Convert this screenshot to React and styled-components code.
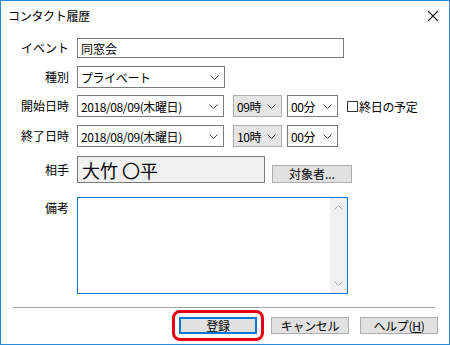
import React from "react";
import styled, { createGlobalStyle } from "styled-components";

const GlobalStyle = createGlobalStyle`
  body {
    margin: 0;
    background: #ffffff;
    font-family: "Noto Sans CJK JP", "Liberation Sans", sans-serif;
  }
`;

const Chevron = ({ up, color = "#444" }) => (
  <svg width="9" height="5" viewBox="0 0 9 5">
    <path
      d={up ? "M0.5 4.5 L4.5 0.5 L8.5 4.5" : "M0.5 0.5 L4.5 4.5 L8.5 0.5"}
      fill="none"
      stroke={color}
      strokeWidth="1"
    />
  </svg>
);

const App = () => {
  return (
    <Window>
      <GlobalStyle />
      <TitleBar>
        <Title>コンタクト履歴</Title>
        <CloseIcon viewBox="0 0 12 12">
          <path d="M1 1 L11 11 M11 1 L1 11" stroke="#222" strokeWidth="1.1" />
        </CloseIcon>
      </TitleBar>

      <Form>
        <Row $mt={8}>
          <Label>イベント</Label>
          <TextBox>同窓会</TextBox>
        </Row>
        <Row $mt={8}>
          <Label>種別</Label>
          <Select $w={148}>
            プライベート
            <Chevron />
          </Select>
        </Row>
        <Row $mt={7}>
          <Label>開始日時</Label>
          <Fields>
            <Select $w={147}>
              2018/08/09(木曜日)
              <Chevron />
            </Select>
            <Select $w={49} $gray $ml={9}>
              09時
              <Chevron />
            </Select>
            <Select $w={51} $ml={5}>
              00分
              <Chevron />
            </Select>
            <Check>
              <Box />
              終日の予定
            </Check>
          </Fields>
        </Row>
        <Row $mt={8}>
          <Label>終了日時</Label>
          <Fields>
            <Select $w={147}>
              2018/08/09(木曜日)
              <Chevron />
            </Select>
            <Select $w={49} $gray $ml={9}>
              10時
              <Chevron />
            </Select>
            <Select $w={51} $ml={5}>
              00分
              <Chevron />
            </Select>
          </Fields>
        </Row>
        <Row $mt={9}>
          <Label>相手</Label>
          <Fields>
            <PartnerBox>大竹 〇平</PartnerBox>
            <SmallButton>対象者...</SmallButton>
          </Fields>
        </Row>
        <Row $mt={14} $top>
          <Label $pt={4}>備考</Label>
          <Memo>
            <MemoText />
            <ScrollBar>
              <Chevron up color="#a6a6a6" />
              <Chevron color="#a6a6a6" />
            </ScrollBar>
          </Memo>
        </Row>
      </Form>

      <Separator />

      <ButtonBar>
        <Highlight>
          <Button $default>登録</Button>
        </Highlight>
        <Button>キャンセル</Button>
        <Button>ヘルプ(<u>H</u>)</Button>
      </ButtonBar>
    </Window>
  );
};

export default App;

const Window = styled.div`
  width: 450px;
  height: 345px;
  box-sizing: border-box;
  border: 1px solid #2b88d8;
  background: #ffffff;
  display: flex;
  flex-direction: column;
  font-size: 12px;
  color: #000;
`;

const TitleBar = styled.div`
  height: 29px;
  display: flex;
  align-items: center;
  justify-content: space-between;
  padding: 0 10px 0 7px;
`;

const Title = styled.div`
  font-size: 12px;
  letter-spacing: -0.3px;
`;

const CloseIcon = styled.svg`
  width: 12px;
  height: 12px;
`;

const Form = styled.div`
  display: flex;
  flex-direction: column;
`;

const Row = styled.div`
  display: grid;
  grid-template-columns: 68px auto;
  column-gap: 8px;
  align-items: ${(p) => (p.$top ? "start" : "center")};
  margin-top: ${(p) => p.$mt}px;
`;

const Label = styled.div`
  text-align: right;
  font-size: 12px;
  line-height: 14px;
  padding-top: ${(p) => p.$pt || 0}px;
`;

const TextBox = styled.div`
  width: 267px;
  height: 20px;
  box-sizing: border-box;
  border: 1px solid #7a7a7a;
  padding: 0 3px;
  display: flex;
  align-items: center;
  font-size: 12px;
`;

const Fields = styled.div`
  display: flex;
  align-items: center;
`;

const Select = styled.div`
  width: ${(p) => p.$w}px;
  height: 22px;
  box-sizing: border-box;
  margin-left: ${(p) => p.$ml || 0}px;
  border: 1px solid ${(p) => (p.$gray ? "#adadad" : "#7a7a7a")};
  background: ${(p) => (p.$gray ? "#e5e5e5" : "#ffffff")};
  display: flex;
  align-items: center;
  justify-content: space-between;
  padding: 0 5px 0 3px;
  font-size: 12px;
  letter-spacing: -0.4px;
  white-space: nowrap;
`;

const Check = styled.label`
  display: flex;
  align-items: center;
  margin-left: 9px;
  font-size: 12px;
  letter-spacing: -0.3px;
`;

const Box = styled.span`
  width: 11px;
  height: 11px;
  box-sizing: border-box;
  border: 1px solid #333;
  background: #fff;
  margin-right: 1px;
`;

const PartnerBox = styled.div`
  width: 188px;
  height: 27px;
  box-sizing: border-box;
  border: 1px solid #7a7a7a;
  background: #f0f0f0;
  padding: 0 4px;
  font-size: 18px;
  line-height: 22px;
  display: flex;
  align-items: center;
`;

const SmallButton = styled.div`
  width: 80px;
  height: 18px;
  box-sizing: border-box;
  margin: 8px 0 0 7px;
  border: 1px solid #adadad;
  background: #e1e1e1;
  display: flex;
  align-items: center;
  justify-content: center;
  font-size: 12px;
`;

const Memo = styled.div`
  width: 271px;
  height: 97px;
  box-sizing: border-box;
  border: 1px solid #0078d7;
  display: flex;
`;

const MemoText = styled.div`
  flex: 1;
`;

const ScrollBar = styled.div`
  width: 17px;
  background: #f0f0f0;
  display: flex;
  flex-direction: column;
  align-items: center;
  justify-content: space-between;
  padding: 7px 0 7px;
`;

const Separator = styled.div`
  margin: 13px 14px 0 12px;
  height: 1px;
  background: #a0a0a0;
`;

const ButtonBar = styled.div`
  display: flex;
  justify-content: flex-end;
  align-items: center;
  gap: 11px;
  padding: 9px 11px 0 0;
`;

const Highlight = styled.div`
  margin: -7px -4px -7px -7px;
  padding: 4px;
  border: 3px solid #e60012;
  border-radius: 8px;
  display: flex;
`;

const Button = styled.div`
  width: 78px;
  height: 17px;
  box-sizing: border-box;
  border: ${(p) => (p.$default ? "2px solid #0078d7" : "1px solid #adadad")};
  background: #e1e1e1;
  display: flex;
  align-items: center;
  justify-content: center;
  font-size: 12px;
  letter-spacing: -0.3px;

  u {
    text-decoration: underline;
  }
`;
